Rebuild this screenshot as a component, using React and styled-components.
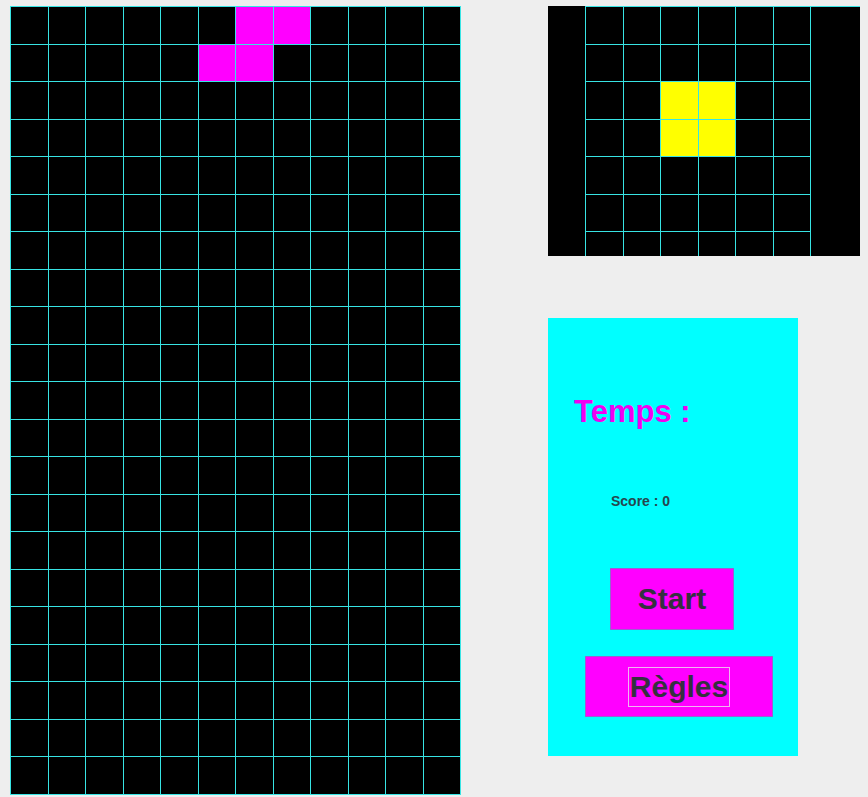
import styled, { createGlobalStyle } from "styled-components";

const GlobalStyle = createGlobalStyle`
    html, body {
        margin: 0;
        padding: 0;
        background-color: #eeeeee;
        font-family: "Liberation Sans", Arial, sans-serif;
    }
`;

const CELL = 37.5;
const LINE = "#38e4e4";

const Page = styled.div`
    display: flex;
    align-items: flex-start;
    padding: 6px 0 0 10px;
    width: 868px;
    height: 797px;
    box-sizing: border-box;
`;

const Grid = styled.div`
    display: grid;
    grid-template-columns: repeat(${(props) => props.cols}, ${CELL}px);
    grid-template-rows: repeat(${(props) => props.rows}, ${CELL}px);
    border-left: 1px solid ${LINE};
    border-top: 1px solid ${LINE};
    background-color: #000;
    flex-shrink: 0;
`;

const Cell = styled.div`
    box-sizing: border-box;
    border-right: 1px solid ${LINE};
    border-bottom: 1px solid ${LINE};
    background-color: ${(props) => props.color || "#000"};
`;

const Side = styled.div`
    display: flex;
    flex-direction: column;
    gap: 62px;
    margin-left: 87px;
`;

const Preview = styled.div`
    width: 312px;
    height: 250px;
    background-color: #000;
    overflow: hidden;
    padding-left: 37px;
    box-sizing: border-box;
`;

const Panel = styled.div`
    width: 250px;
    height: 438px;
    background-color: #00ffff;
    display: flex;
    flex-direction: column;
    align-items: flex-start;
    padding-top: 76px;
    box-sizing: border-box;
`;

const Temps = styled.div`
    margin-left: 26px;
    font-size: 31px;
    font-weight: bold;
    color: #f000f0;
`;

const Score = styled.div`
    margin: 63px 0 0 63px;
    font-size: 14px;
    font-weight: bold;
    color: #26464e;
`;

const Button = styled.button`
    display: flex;
    align-items: center;
    justify-content: center;
    width: ${(props) => props.width}px;
    height: ${(props) => props.height}px;
    margin-left: ${(props) => props.left}px;
    margin-top: ${(props) => props.top}px;
    padding: 0;
    background-color: #ff00ff;
    border: 1px solid #9b5fd0;
    font-family: "Liberation Sans", Arial, sans-serif;
    font-size: 30px;
    font-weight: bold;
    color: #353040;
    cursor: pointer;
`;

const Focus = styled.span`
    display: inline-block;
    padding: 0 1px;
    line-height: 38px;
    border: 1px solid #f0b4f0;
`;

function Board({ cols, rows, filled, color }) {
    const cells = [];
    for (let r = 0; r < rows; r++) {
        for (let c = 0; c < cols; c++) {
            const on = filled.some(([fr, fc]) => fr === r && fc === c);
            cells.push(<Cell key={`${r}-${c}`} color={on ? color : null} />);
        }
    }
    return (
        <Grid cols={cols} rows={rows}>
            {cells}
        </Grid>
    );
}

export default function App() {
    return (
        <>
            <GlobalStyle />
            <Page>
                <Board
                    cols={12}
                    rows={21}
                    color="#ff00ff"
                    filled={[
                        [0, 6],
                        [0, 7],
                        [1, 5],
                        [1, 6],
                    ]}
                />
                <Side>
                    <Preview>
                        <Board
                            cols={6}
                            rows={7}
                            color="#ffff00"
                            filled={[
                                [2, 2],
                                [2, 3],
                                [3, 2],
                                [3, 3],
                            ]}
                        />
                    </Preview>
                    <Panel>
                        <Temps>Temps :</Temps>
                        <Score>Score : 0</Score>
                        <Button width={124} height={62} left={62} top={59}>
                            Start
                        </Button>
                        <Button width={188} height={61} left={37} top={26}>
                            <Focus>Règles</Focus>
                        </Button>
                    </Panel>
                </Side>
            </Page>
        </>
    );
}
